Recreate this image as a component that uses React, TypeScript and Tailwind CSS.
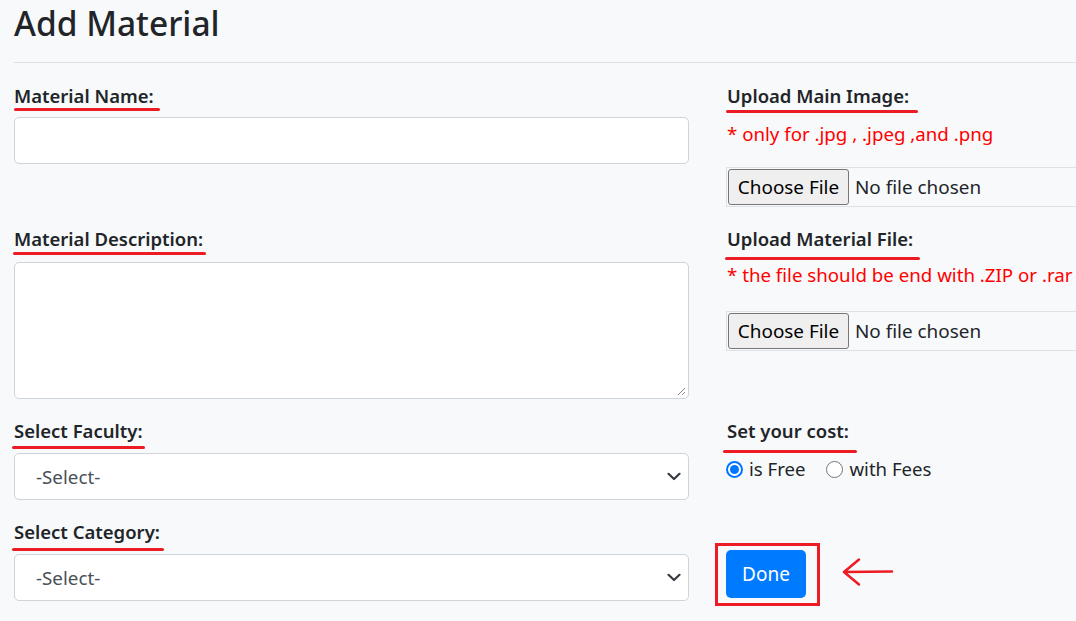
import React from "react";

const font = { fontFamily: '"Noto Sans", "Open Sans", sans-serif' };

function SelectBox() {
  return (
    <div className="relative h-[47px] w-full rounded-[5px] border border-[#ced4da] bg-white">
      <span className="absolute left-[21px] top-1/2 -translate-y-1/2 text-[18.8px] leading-[30px] text-[#495057]">-Select-</span>
      <span className="absolute right-[7px] top-1/2 -translate-y-1/2 flex h-[10px] w-[14px] items-center justify-center">
        <svg width="14" height="9" viewBox="0 0 14 9">
          <path d="M1.5 1.8 L7 7 L12.5 1.8" fill="none" stroke="#343a40" strokeWidth="2.2" strokeLinecap="round" strokeLinejoin="round" />
        </svg>
      </span>
    </div>
  );
}

function FileInput() {
  return (
    <div className="flex h-[40px] w-full items-center border border-[#dee2e6] pl-[1px]">
      <div className="flex h-[36px] w-[121px] items-center justify-center rounded-[3px] border border-[#767676] bg-[#efefef] text-[18.9px] text-[#000]">
        Choose File
      </div>
      <span className="ml-[6px] text-[18.9px] text-[#212529]">No file chosen</span>
    </div>
  );
}

export default function App() {
  return (
    <div className="min-h-screen w-full overflow-hidden bg-[#f8f9fa] text-[#212529]" style={font}>
      <div className="pl-[14px]">
        <h3 className="m-0 pt-[4px] text-[33.5px] font-medium leading-[38px] text-[#212529]">Add Material</h3>
        <hr className="mt-[20px] border-0 border-t border-[#dee2e6]" />

        <div className="mt-[21px] grid w-[1387px] grid-cols-[675px_675px] gap-x-[37px] gap-y-[20px]">
          {/* Row 1 left */}
          <div>
            <div className="text-[18.5px] font-semibold leading-[24px]">Material Name:</div>
            <div className="h-[3px] w-[146px] rounded-full bg-[#ed1c24]" />
            <div className="mt-[6px] h-[47px] w-full rounded-[5px] border border-[#ced4da] bg-white" />
          </div>
          {/* Row 1 right */}
          <div className="w-[675px]">
            <div className="text-[18.5px] font-semibold leading-[24px] pl-[1px]">Upload Main Image:</div>
            <div className="mt-[2px] h-[3px] w-[192px] rounded-full bg-[#ed1c24]" />
            <div className="mt-[6px] text-[18.7px] leading-[30px] text-[#ff0000] pl-[1px]">* only for .jpg , .jpeg ,and .png</div>
            <div className="mt-[18px]">
              <FileInput />
            </div>
          </div>

          {/* Row 2 left */}
          <div>
            <div className="text-[18.5px] font-semibold leading-[24px]">Material Description:</div>
            <div className="mt-[1px] -ml-[1px] h-[3px] w-[193px] rounded-full bg-[#ed1c24]" />
            <div className="relative mt-[7px] h-[137px] w-full rounded-[5px] border border-[#ced4da] bg-white">
              <svg width="10" height="10" viewBox="0 0 10 10" className="absolute bottom-[2px] right-[2px]">
                <path d="M9 2 L2 9 M9 6 L6 9" stroke="#8a8a8a" strokeWidth="1" />
              </svg>
            </div>
          </div>
          {/* Row 2 right */}
          <div>
            <div className="text-[18.5px] font-semibold leading-[24px] pl-[1px]">Upload Material File:</div>
            <div className="mt-[6px] -ml-[1px] h-[3px] w-[195px] rounded-full bg-[#ed1c24]" />
            <div className="text-[18.7px] leading-[30px] text-[#ff0000] pl-[1px]">* the file should be end with .ZIP or .rar</div>
            <div className="mt-[21px]">
              <FileInput />
            </div>
          </div>

          {/* Row 3 left */}
          <div>
            <div className="text-[18.5px] font-semibold leading-[24px]">Select Faculty:</div>
            <div className="mt-[3px] -ml-[2px] h-[3px] w-[133px] rounded-full bg-[#ed1c24]" />
            <div className="mt-[4px]">
              <SelectBox />
            </div>
          </div>
          {/* Row 3 right */}
          <div>
            <div className="text-[18.5px] font-semibold leading-[24px] pl-[1px]">Set your cost:</div>
            <div className="mt-[7px] -ml-[3px] h-[3px] w-[134px] rounded-full bg-[#ed1c24]" />
            <div className="mt-[1px] flex h-[30px] items-center text-[18.6px]">
              <span className="flex h-[17px] w-[17px] items-center justify-center rounded-full border-[2px] border-[#0075ff] bg-white">
                <span className="h-[9px] w-[9px] rounded-full bg-[#0075ff]" />
              </span>
              <span className="ml-[6px]">is Free</span>
              <span className="ml-[21px] h-[17px] w-[17px] rounded-full border border-[#767676] bg-white" />
              <span className="ml-[6px]">with Fees</span>
            </div>
          </div>

          {/* Row 4 left */}
          <div>
            <div className="text-[18.5px] font-semibold leading-[24px]">Select Category:</div>
            <div className="mt-[4px] -ml-[2px] h-[3px] w-[152px] rounded-full bg-[#ed1c24]" />
            <div className="mt-[3px]">
              <SelectBox />
            </div>
          </div>
          {/* Row 4 right */}
          <div>
            <div className="relative mt-[30px] w-[80px]">
              <button className="flex h-[48px] w-[80px] items-center justify-center rounded-[5px] bg-[#007bff] pt-[1px] text-[19px] text-white">
                Done
              </button>
              <div className="pointer-events-none absolute -left-[11px] -top-[7px] h-[63px] w-[105px] border-[3px] border-[#ed1c24]" />
              <svg width="52" height="30" viewBox="0 0 52 30" className="absolute left-[116px] top-[7px]">
                <path d="M2 15 L50 14.5 M2 15 L17 2.5 M2 15 L17 27.5" fill="none" stroke="#ed1c24" strokeWidth="2.5" strokeLinecap="round" />
              </svg>
            </div>
          </div>
        </div>
      </div>
    </div>
  );
}
